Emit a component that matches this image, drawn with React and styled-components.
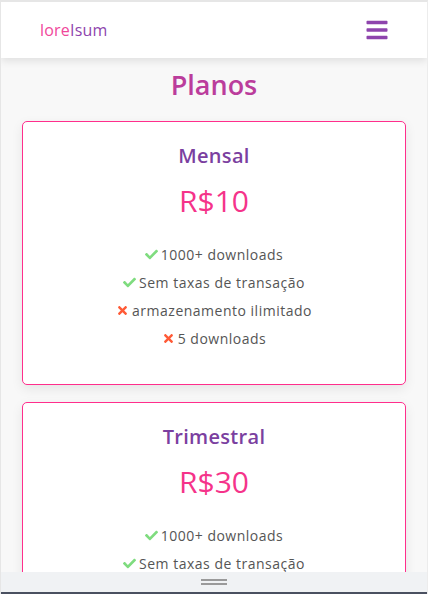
import React from "react";
import styled, { createGlobalStyle } from "styled-components";
import { FaBars, FaCheck, FaTimes } from "react-icons/fa";

const GlobalStyle = createGlobalStyle`
  body {
    margin: 0;
    font-family: "Open Sans", "Noto Sans", sans-serif;
    background: #f8f8f8;
  }
`;

const plans = [
  {
    name: "Mensal",
    price: "R$10",
    items: [
      { ok: true, text: "1000+ downloads" },
      { ok: true, text: "Sem taxas de transação" },
      { ok: false, text: "armazenamento ilimitado" },
      { ok: false, text: "5 downloads" },
    ],
  },
  {
    name: "Trimestral",
    price: "R$30",
    items: [
      { ok: true, text: "1000+ downloads" },
      { ok: true, text: "Sem taxas de transação" },
    ],
  },
];

const App = () => {
  return (
    <>
      <GlobalStyle />
      <Frame>
        <Navbar>
          <Logo>
            <span className="lore">lore</span>
            <span className="isum">Isum</span>
          </Logo>
          <MenuButton>
            <FaBars />
          </MenuButton>
        </Navbar>
        <Main>
          <PageTitle>Planos</PageTitle>
          <CardList>
            {plans.map((plan) => (
              <Card key={plan.name}>
                <PlanName>{plan.name}</PlanName>
                <Price>{plan.price}</Price>
                <Features>
                  {plan.items.map((item, index) => (
                    <Feature key={index} $ok={item.ok}>
                      {item.ok ? <FaCheck /> : <FaTimes />}
                      <span>{item.text}</span>
                    </Feature>
                  ))}
                </Features>
              </Card>
            ))}
          </CardList>
        </Main>
        <BottomBar>
          <Handle />
        </BottomBar>
      </Frame>
    </>
  );
};

export default App;

const Frame = styled.div`
  height: 594px;
  box-sizing: border-box;
  display: flex;
  flex-direction: column;
  border-top: 2px solid #e6e6e6;
  border-left: 1px solid #e6e6e6;
  border-right: 1px solid #ececec;
  overflow: hidden;
`;

const Navbar = styled.header`
  position: relative;
  z-index: 2;
  flex: 0 0 56px;
  display: flex;
  align-items: center;
  justify-content: space-between;
  padding: 0 39px;
  background: #fff;
  box-shadow: 0 3px 8px rgba(0, 0, 0, 0.1);
`;

const Logo = styled.div`
  font-size: 16px;
  letter-spacing: 0.2px;
  .lore {
    color: #f0479b;
  }
  .isum {
    color: #8e44ad;
  }
`;

const MenuButton = styled.div`
  display: flex;
  color: #8e44ad;
  svg {
    width: 22px;
    height: 24px;
  }
`;

const Main = styled.main`
  flex: 1;
  min-height: 0;
  overflow: hidden;
  background: #f8f8f8;
  padding: 0 21px;
`;

const PageTitle = styled.h1`
  margin: 9px 0 18px;
  text-align: center;
  font-size: 27px;
  line-height: 36px;
  font-weight: 600;
  color: #bb3d9c;
`;

const CardList = styled.div`
  display: flex;
  flex-direction: column;
  gap: 17px;
`;

const Card = styled.section`
  background: #fff;
  border: 1px solid #ff2e8c;
  border-radius: 5px;
  padding: 20px 16px 32px;
  text-align: center;
  box-shadow: 0 4px 12px rgba(0, 0, 0, 0.08);
`;

const PlanName = styled.h3`
  margin: 0;
  font-size: 20px;
  line-height: 28px;
  font-weight: 600;
  letter-spacing: 0.3px;
  color: #7b3fa0;
`;

const Price = styled.div`
  margin-top: 11px;
  font-size: 30px;
  line-height: 40px;
  font-weight: 400;
  color: #f5338a;
`;

const Features = styled.ul`
  list-style: none;
  margin: 19px 0 0;
  padding: 0;
`;

const Feature = styled.li`
  display: flex;
  align-items: center;
  justify-content: center;
  gap: 3px;
  height: 28px;
  font-size: 14px;
  letter-spacing: 0.5px;
  color: #555;
  svg {
    width: 13px;
    height: 13px;
    color: ${(props) => (props.$ok ? "#7fdc7f" : "#ff5a36")};
  }
`;

const BottomBar = styled.div`
  flex: 0 0 20px;
  display: flex;
  align-items: center;
  justify-content: center;
  background: #f0f2f4;
  border-bottom: 2px solid #4a5060;
  position: relative;
  z-index: 2;
`;

const Handle = styled.div`
  width: 26px;
  height: 2px;
  border-top: 2px solid #9a9a9a;
  border-bottom: 2px solid #9a9a9a;
`;
